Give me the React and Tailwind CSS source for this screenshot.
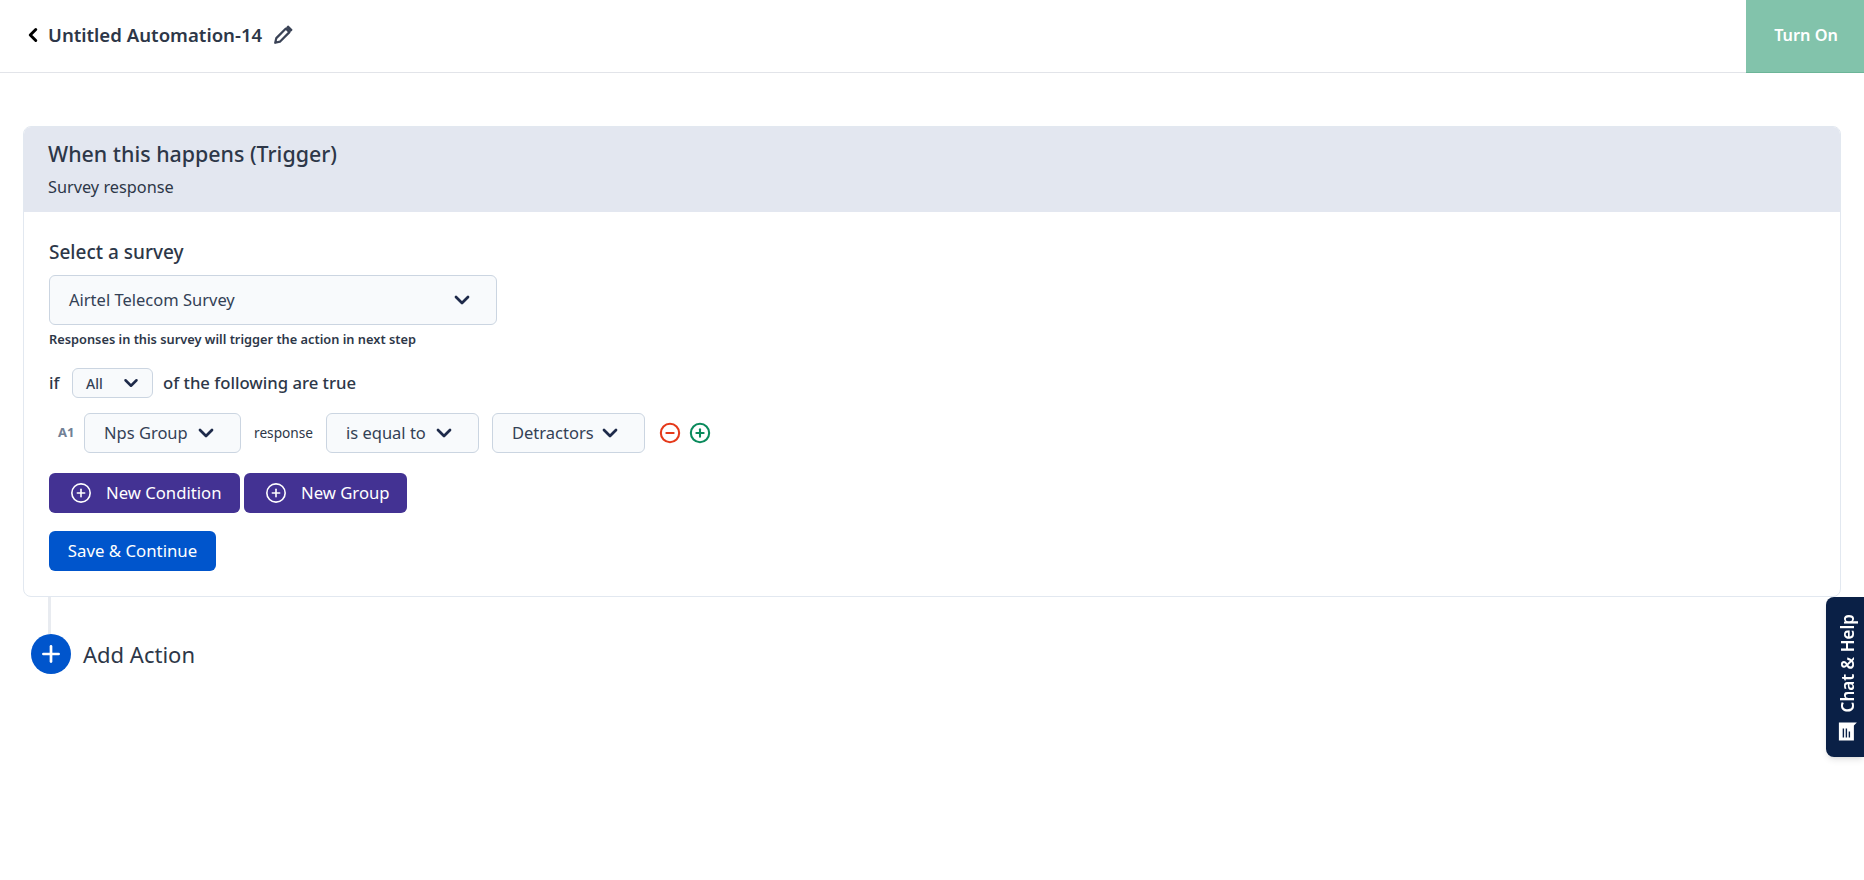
import React from 'react';
import { ChevronLeft, ChevronDown, CirclePlus, CircleMinus, Plus } from 'lucide-react';

const Dropdown = ({ label, className, textClass = 'text-[16.5px]', iconClass = 'w-6 h-6' }) => (
    <div className={`flex items-center justify-between bg-[#f8fafc] border border-[#cbd5e1] rounded-md text-[#334155] ${className}`}>
        <span className={textClass}>{label}</span>
        <ChevronDown className={`${iconClass} text-[#1e2a4a]`} strokeWidth={2.75} />
    </div>
);

const PurpleButton = ({ label, className }) => (
    <button className={`h-10 flex items-center bg-[#433293] rounded-md text-white text-[16.7px] ${className}`}>
        <CirclePlus className="w-[22px] h-[22px] mr-[14px]" strokeWidth={1.75} />
        {label}
    </button>
);

const App = () => {
    return (
        <div className="min-h-[880px] bg-white font-['Noto_Sans',sans-serif] text-[#2d3748]">
            {/* Top bar */}
            <header className="h-[73px] flex items-center justify-between border-b border-[#e2e4e9]">
                <div className="flex items-center pl-[22px] pb-[2px]">
                    <ChevronLeft className="w-[22px] h-[22px] text-black" strokeWidth={3.25} />
                    <span className="ml-[4px] text-[18.6px] font-semibold text-[#2d3748]">Untitled Automation-14</span>
                    <svg className="ml-[11px] w-[20px] h-[20px]" viewBox="0 0 18 18" fill="none">
                        <path d="M2 16l1-4.2L11.6 3.2l3.2 3.2L6.2 15z" stroke="#3a4356" strokeWidth="2" strokeLinejoin="round" />
                        <path d="M12.6 2.2l1-1 3.2 3.2-1 1z" fill="#3a4356" stroke="#3a4356" strokeWidth="1.4" strokeLinejoin="round" />
                    </svg>
                </div>
                <button className="w-[118px] h-[73px] bg-[#82c3ab] border-b border-[#6cb598] text-white text-[16.3px] font-semibold pl-[2px]">
                    Turn On
                </button>
            </header>

            <main className="pt-[53px] pl-[23px] pr-[23px]">
                {/* Trigger card */}
                <section className="rounded-lg border border-[#e2e8f0] bg-white overflow-hidden">
                    <div className="h-[86px] bg-[#e3e7f0] pl-[25px] pt-[11px] -mt-px -mx-px">
                        <h2 className="text-[21.4px] leading-[34px] font-medium text-[#2d3748]">When this happens (Trigger)</h2>
                        <p className="text-[16.3px] leading-[22px] mt-[5px] text-[#2d3748]">Survey response</p>
                    </div>

                    <div className="pl-[25px] pt-[27px] pb-[25px]">
                        <label className="block text-[19px] leading-[26px] font-medium text-[#2d3748]">Select a survey</label>
                        <Dropdown label="Airtel Telecom Survey" className="w-[448px] h-[50px] mt-[10px] pl-[19px] pr-[22px]" />
                        <p className="mt-[5px] text-[12.8px] leading-[18px] font-semibold text-[#2d3748]">
                            Responses in this survey will trigger the action in next step
                        </p>

                        <div className="flex items-center mt-[20px] h-[30px] text-[16.7px] font-medium">
                            <span className="w-[11px]">if</span>
                            <Dropdown
                                label="All"
                                className="w-[81px] h-[30px] ml-[12px] pl-[13px] pr-[10px]"
                                textClass="text-[14px]"
                                iconClass="w-[22px] h-[22px]"
                            />
                            <span className="ml-[10px]">of the following are true</span>
                        </div>

                        <div className="flex items-center mt-[15px] h-[40px]">
                            <span className="w-[35px] pl-[9px] text-[13px] font-bold text-[#718096]">A1</span>
                            <Dropdown label="Nps Group" className="w-[157px] h-[40px] pl-[19px] pr-[22px]" />
                            <span className="w-[73px] pl-[13px] text-[13.7px] text-[#2d3748]">response</span>
                            <Dropdown label="is equal to" className="w-[153px] h-[40px] ml-[12px] pl-[19px] pr-[22px]" />
                            <Dropdown label="Detractors" className="w-[153px] h-[40px] ml-[13px] pl-[19px] pr-[22px]" />
                            <CircleMinus className="ml-[14px] w-[22px] h-[22px] text-[#e5391a]" strokeWidth={2.25} />
                            <CirclePlus className="ml-[8px] w-[22px] h-[22px] text-[#0a8a5c]" strokeWidth={2.25} />
                        </div>

                        <div className="flex gap-[4px] mt-[20px]">
                            <PurpleButton label="New Condition" className="w-[191px] pl-[21px]" />
                            <PurpleButton label="New Group" className="w-[163px] pl-[21px]" />
                        </div>

                        <button className="block mt-[18px] w-[167px] h-10 bg-[#0055cc] rounded-md text-white text-[16.8px]">
                            Save &amp; Continue
                        </button>
                    </div>
                </section>

                {/* Connector + add action */}
                <div className="ml-[25px] w-[3px] h-[37px] bg-[#e8ebf0]" />
                <div className="flex items-center ml-[8px]">
                    <span className="w-10 h-10 rounded-full bg-[#0055cc] flex items-center justify-center">
                        <Plus className="w-[26px] h-[26px] text-white" strokeWidth={2.5} />
                    </span>
                    <span className="ml-[12px] text-[22px] text-[#2d3748]">Add Action</span>
                </div>
            </main>

            {/* Chat tab */}
            <div className="fixed right-0 top-[597px] w-[38px] h-[160px] bg-[#0a2046] rounded-l-lg shadow-md flex items-center justify-center pl-[5px]">
                <div className="-rotate-90 flex flex-row items-center whitespace-nowrap text-white text-[17px] font-semibold translate-y-px">
                    <svg className="w-[20px] h-[20px] mr-[9px] rotate-90" viewBox="0 0 20 20">
                        <path d="M1 1h18l-3 3v15H1z" fill="#fff" />
                        <path d="M5.5 7v9M8.5 7v9M11.5 10v6" stroke="#0a2046" strokeWidth="1.4" />
                    </svg>
                    Chat &amp; Help
                </div>
            </div>
        </div>
    );
};

export default App;
